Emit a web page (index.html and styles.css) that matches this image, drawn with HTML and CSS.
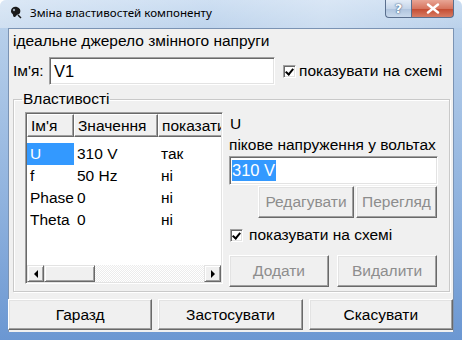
FILE: index.html
```html
<!DOCTYPE html>
<html lang="uk">
<head>
  <meta charset="UTF-8">
  <title>Зміна властивостей компоненту</title>
  <link rel="stylesheet" href="styles.css">
</head>
<body>

  <div class="window">
    <div class="titlebar">
      <svg class="app-icon" width="14" height="14" viewBox="0 0 14 14">
        <path d="M2 6 C2 3 5 1 8 2 C11 3 12 5 11 8 C10 10 8 9 7 11 C6 13 4 12 4 10 C4 8 2 9 2 6 Z" fill="#1a1a1a"/>
        <circle cx="5" cy="5" r="1.2" fill="#9aa6b4"/>
        <path d="M9 10 L12 13" stroke="#1a1a1a" stroke-width="1.5"/>
      </svg>
      <span class="title">Зміна властивостей компоненту</span>
      <div class="caption-buttons">
        <div class="cap-btn help">?</div>
        <div class="cap-btn close">
          <svg width="14" height="11" viewBox="0 0 14 11">
            <path d="M2 1.5 L12 9.5 M12 1.5 L2 9.5" stroke="#fff" stroke-width="2.4" stroke-linecap="round"/>
          </svg>
        </div>
      </div>
    </div>

    <div class="client">
      <div class="desc">ідеальне джерело змінного напруги</div>

      <div class="name-row">
        <span class="name-label">Ім'я:</span>
        <div class="field name-field">V1</div>
        <span class="check checked"></span>
        <span class="check-text">показувати на схемі</span>
      </div>

      <fieldset class="group">
        <legend>Властивості</legend>
        <div class="group-body">

          <div class="list">
            <div class="list-view">
              <div class="list-row list-head">
                <div class="cell col-name">Ім'я</div>
                <div class="cell col-value">Значення</div>
                <div class="cell col-show">показати</div>
              </div>
              <div class="list-rows">
                <div class="list-row">
                  <div class="cell col-name selected">U</div>
                  <div class="cell col-value">310 V</div>
                  <div class="cell col-show">так</div>
                </div>
                <div class="list-row">
                  <div class="cell col-name">f</div>
                  <div class="cell col-value">50 Hz</div>
                  <div class="cell col-show">ні</div>
                </div>
                <div class="list-row">
                  <div class="cell col-name">Phase</div>
                  <div class="cell col-value">0</div>
                  <div class="cell col-show">ні</div>
                </div>
                <div class="list-row">
                  <div class="cell col-name">Theta</div>
                  <div class="cell col-value">0</div>
                  <div class="cell col-show">ні</div>
                </div>
              </div>
            </div>
            <div class="hscroll">
              <div class="sb-btn"><span class="arrow-left"></span></div>
              <div class="sb-track">
                <div class="sb-thumb"></div>
              </div>
              <div class="sb-btn"><span class="arrow-right"></span></div>
            </div>
          </div>

          <div class="details">
            <div class="param-name">U</div>
            <div class="param-desc">пікове напруження у вольтах</div>
            <div class="field value-field"><span class="sel">310 V</span></div>
            <div class="btn-row edit-row">
              <button class="btn disabled edit-btn">Редагувати</button>
              <button class="btn disabled view-btn">Перегляд</button>
            </div>
            <div class="check-row">
              <span class="check checked"></span>
              <span class="check-text">показувати на схемі</span>
            </div>
            <div class="btn-row add-row">
              <button class="btn disabled wide">Додати</button>
              <button class="btn disabled wide">Видалити</button>
            </div>
          </div>

        </div>
      </fieldset>

      <div class="actions">
        <button class="btn main-btn">Гаразд</button>
        <button class="btn main-btn">Застосувати</button>
        <button class="btn main-btn">Скасувати</button>
      </div>
    </div>
  </div>

</body>
</html>
```

FILE: styles.css
```css
body {
  margin: 0;
  font-family: 'Liberation Sans', Arial, sans-serif;
  font-size: 15.5px;
  color: #000;
  background: #fff;
}

.window {
  width: 462px;
  height: 340px;
  box-sizing: border-box;
  background: linear-gradient(180deg, #c9dcf1 0px, #b7cfea 28px, #8fb2de 60%, #6b97d2 100%);
  border-radius: 6px 6px 0 0;
  display: flex;
  flex-direction: column;
}

/* title bar */
.titlebar {
  height: 28px;
  display: flex;
  align-items: flex-start;
  background: linear-gradient(100deg, rgba(255,255,255,0.35) 0%, rgba(255,255,255,0.1) 45%, rgba(255,255,255,0.3) 70%, rgba(255,255,255,0.05) 100%);
  border-radius: 6px 6px 0 0;
}

.app-icon {
  margin: 5px 0 0 9px;
}

.title {
  margin: 5px 0 0 7px;
  font-family: 'Noto Sans', sans-serif;
  font-size: 11.6px;
  line-height: 16px;
  color: #000;
}

.caption-buttons {
  margin-left: auto;
  margin-right: 8px;
  display: flex;
}

.cap-btn {
  height: 18px;
  display: flex;
  align-items: center;
  justify-content: center;
  border: 1px solid #5a6f8e;
  border-top: none;
  box-sizing: border-box;
}

.help {
  width: 26px;
  border-radius: 0 0 0 4px;
  border-right: none;
  background: linear-gradient(180deg, #e3ecf7 0%, #c5d5e9 50%, #aec3dd 51%, #c9d9ec 100%);
  color: #fff;
  font-family: 'DejaVu Sans', sans-serif;
  font-weight: bold;
  font-size: 13px;
  text-shadow: 0 0 2px #3c5a80, 0 0 1px #3c5a80;
}

.close {
  width: 43px;
  border-radius: 0 0 4px 0;
  background: linear-gradient(180deg, #e8a595 0%, #d7755f 50%, #c34a30 51%, #d87c64 100%);
}

/* client area */
.client {
  margin: 0 8px 8px 8px;
  flex: 1;
  background: #f0f0f0;
  border: 1px solid #7b93b3;
  border-bottom: none;
}

.desc {
  margin: 3px 0 0 4px;
  line-height: 18px;
}

.name-row {
  display: flex;
  align-items: center;
  margin: 7px 0 0 4px;
}

.name-label {
  width: 36px;
}

.field {
  box-sizing: border-box;
  background: #fff;
  border: 1px solid;
  border-color: #a0a0a0 #fff #fff #a0a0a0;
  box-shadow: inset 1px 1px #696969, inset -1px -1px #e3e3e3;
  font-size: 16.5px;
  display: flex;
  align-items: center;
}

.name-field {
  width: 226px;
  height: 28px;
  padding-left: 4px;
}

.check {
  flex: none;
  width: 13px;
  height: 13px;
  box-sizing: border-box;
  background: #fff;
  border: 1px solid;
  border-color: #a0a0a0 #fff #fff #a0a0a0;
  box-shadow: inset 1px 1px #696969, inset -1px -1px #e3e3e3;
  position: relative;
}

.check.checked::after {
  content: "";
  position: absolute;
  left: 3px;
  top: 1px;
  width: 3px;
  height: 6px;
  border: solid #000;
  border-width: 0 2px 2px 0;
  transform: rotate(40deg);
}

.name-row .check {
  margin-left: 8px;
}

.check-text {
  margin-left: 3px;
  white-space: nowrap;
}

/* properties group */
.group {
  margin: 5px 3px 0 4px;
  padding: 0;
  border: 1px solid #c9c9c9;
  box-shadow: inset 1px 1px #fff, 1px 1px #fff;
  height: 202px;
  box-sizing: border-box;
}

.group legend {
  margin-left: 8px;
  padding: 0 1px;
  line-height: 18px;
}

.group-body {
  display: flex;
  padding: 4px 0 0 11px;
}

/* list view */
.list {
  width: 198px;
  height: 172px;
  box-sizing: border-box;
  border: 1px solid;
  border-color: #a0a0a0 #fff #fff #a0a0a0;
  box-shadow: inset 1px 1px #696969, inset -1px -1px #e3e3e3;
  background: #fff;
  display: flex;
  flex-direction: column;
  padding: 1px;
}

.list-view {
  flex: 1;
  overflow: hidden;
}

.list-row {
  display: flex;
  height: 22px;
  white-space: nowrap;
}

.list-head {
  height: 23px;
  margin-bottom: 6px;
}

.list-head .cell {
  box-sizing: border-box;
  background: #f0f0f0;
  border: 1px solid;
  border-color: #fff #696969 #696969 #fff;
  box-shadow: inset -1px -1px #a0a0a0;
}

.cell {
  flex: none;
  display: flex;
  align-items: center;
  padding-left: 3px;
  box-sizing: border-box;
}

.col-name {
  width: 47px;
}

.col-value {
  width: 84px;
}

.col-show {
  width: 80px;
}

.selected {
  background: #3399ff;
  color: #fff;
}

.hscroll {
  height: 17px;
  display: flex;
}

.sb-btn {
  width: 17px;
  box-sizing: border-box;
  background: #f0f0f0;
  border: 1px solid;
  border-color: #e3e3e3 #696969 #696969 #e3e3e3;
  box-shadow: inset 1px 1px #fff, inset -1px -1px #a0a0a0;
  display: flex;
  align-items: center;
  justify-content: center;
}

.arrow-left {
  border-style: solid;
  border-width: 4px 4px 4px 0;
  border-color: transparent #000 transparent transparent;
}

.arrow-right {
  border-style: solid;
  border-width: 4px 0 4px 4px;
  border-color: transparent transparent transparent #000;
}

.sb-track {
  flex: 1;
  background: repeating-conic-gradient(#fff 0 25%, #ececec 0 50%) 0 0 / 2px 2px;
}

.sb-thumb {
  width: 51px;
  height: 100%;
  box-sizing: border-box;
  background: #f0f0f0;
  border: 1px solid;
  border-color: #e3e3e3 #696969 #696969 #e3e3e3;
  box-shadow: inset 1px 1px #fff, inset -1px -1px #a0a0a0;
}

/* details panel */
.details {
  width: 210px;
  margin-left: 6px;
  display: flex;
  flex-direction: column;
}

.param-name {
  margin: 3px 0 0 1px;
  line-height: 18px;
}

.param-desc {
  margin-top: 3px;
  line-height: 18px;
  white-space: nowrap;
}

.value-field {
  width: 209px;
  height: 29px;
  margin-top: 2px;
  padding-left: 2px;
}

.sel {
  background: #3399ff;
  color: #fff;
  line-height: 21px;
  padding-right: 1px;
}

.btn-row {
  display: flex;
  justify-content: flex-end;
}

.edit-row {
  gap: 2px;
  margin-top: 1px;
  padding-right: 2px;
}

.btn {
  font-family: 'Liberation Sans', Arial, sans-serif;
  font-size: 15.5px;
  background: #f0f0f0;
  color: #000;
  box-sizing: border-box;
  border: 1px solid;
  border-color: #fff #696969 #696969 #fff;
  box-shadow: inset -1px -1px #a0a0a0, inset 1px 1px #e3e3e3;
  padding: 0;
  white-space: nowrap;
}

.btn.disabled {
  color: #8d8d8d;
}

.edit-btn {
  width: 96px;
  height: 32px;
}

.view-btn {
  width: 81px;
  height: 32px;
}

.check-row {
  display: flex;
  align-items: center;
  margin-top: 8px;
  padding-left: 1px;
}

.check-row .check-text {
  margin-left: 6px;
}

.add-row {
  gap: 8px;
  justify-content: flex-start;
  margin-top: 11px;
}

.wide {
  width: 100px;
  height: 32px;
}

/* dialog buttons */
.actions {
  display: flex;
  gap: 6px;
  margin: 7px 0 0 -1px;
}

.main-btn {
  width: 145px;
  height: 31px;
}
```
